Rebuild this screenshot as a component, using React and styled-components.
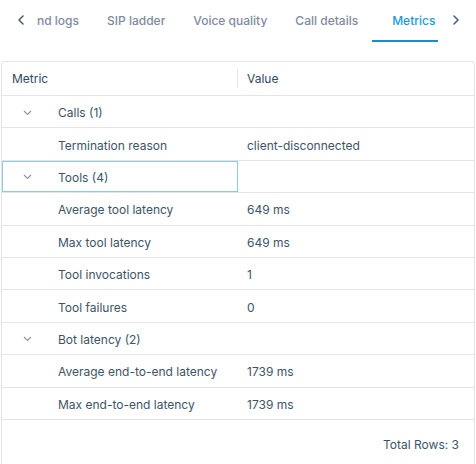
import React from "react";
import styled, { createGlobalStyle } from "styled-components";

const Global = createGlobalStyle`
  html, body { margin: 0; padding: 0; background: #fff; overflow: hidden; }
  body { font-family: Inter, "Noto Sans", sans-serif; font-size: 12px; color: #3d5468; }
  * { box-sizing: border-box; }
`;

const Page = styled.div`
  width: 476px;
  height: 464px;
  display: flex;
  flex-direction: column;
  padding: 0 1px;
`;

const TabBar = styled.div`
  display: flex;
  align-items: stretch;
  height: 42px;
  margin: 0 -1px;
`;

const Arrow = styled.button`
  width: ${(p) => p.$w}px;
  flex: none;
  border: 0;
  background: none;
  padding: 0 0 2px 0;
  display: flex;
  align-items: center;
  justify-content: ${(p) => (p.$side === "left" ? "flex-start" : "flex-end")};
  padding-left: ${(p) => (p.$side === "left" ? 17 : 0)}px;
  padding-right: ${(p) => (p.$side === "right" ? 16 : 0)}px;
  color: #4b6074;
  cursor: pointer;
`;

const TabList = styled.div`
  flex: 1;
  display: flex;
  overflow: hidden;
`;

const Tab = styled.div`
  position: relative;
  flex: none;
  display: flex;
  align-items: center;
  padding: 0 ${(p) => p.$pr}px 2px ${(p) => p.$pl}px;
  font-weight: 500;
  font-size: 12px;
  color: ${(p) => (p.$active ? "#1b9ad6" : "#7e8aa0")};
  white-space: nowrap;
  &::after {
    content: "";
    display: ${(p) => (p.$active ? "block" : "none")};
    position: absolute;
    left: 0;
    width: 66px;
    bottom: 0;
    height: 2px;
    background: #1190d0;
  }
`;

const Card = styled.div`
  margin-top: 19px;
  border: 1px solid #e2e4e6;
  border-bottom: 0;
  border-radius: 4px 4px 0 0;
  flex: 1;
  display: flex;
  flex-direction: column;
`;

const Row = styled.div`
  display: grid;
  grid-template-columns: 236px 1fr;
  height: ${(p) => (p.$header ? 34 : 32.4)}px;
  border-bottom: 1px solid #e2e4e6;
`;

const Cell = styled.div`
  position: relative;
  display: flex;
  align-items: center;
  padding-left: ${(p) => p.$pl ?? 10}px;
  padding-top: ${(p) => (p.$header ? 0 : 2)}px;
  color: ${(p) => (p.$header ? "#2f4a62" : "#3d5468")};
  white-space: nowrap;
  box-shadow: ${(p) => (p.$focus ? "inset 0 0 0 1px #8ccbea" : "none")};
  &::after {
    content: "";
    display: ${(p) => (p.$divider ? "block" : "none")};
    position: absolute;
    right: 0;
    top: 7px;
    bottom: 7px;
    width: 1px;
    background: #e2e4e6;
  }
`;

const ValueCell = styled(Cell)`
  padding-left: 9px;
`;

const Toggle = styled.span`
  width: 30px;
  margin-right: 16px;
  display: flex;
  justify-content: center;
  align-items: center;
`;

const Footer = styled.div`
  flex: 1;
  display: flex;
  justify-content: flex-end;
  padding: 17px 15px 0 0;
  color: #3d5468;
`;

const Chevron = ({ dir }) => (
  <svg width="8" height="12" viewBox="0 0 8 12">
    <path
      d={dir === "left" ? "M6 2 L2 6 L6 10" : "M2 2 L6 6 L2 10"}
      fill="none"
      stroke="#4b6074"
      strokeWidth="1.6"
      strokeLinecap="round"
      strokeLinejoin="round"
    />
  </svg>
);

const Caret = () => (
  <svg width="9" height="6" viewBox="0 0 9 6">
    <path d="M1 1 L4.5 4.5 L8 1" fill="none" stroke="#8a96a3" strokeWidth="1.1" />
  </svg>
);

const tabs = [
  { label: "nd logs", pl: 0, pr: 14 },
  { label: "SIP ladder", pl: 14, pr: 14 },
  { label: "Voice quality", pl: 14, pr: 14 },
  { label: "Call details", pl: 14, pr: 14 },
  { label: "Metrics", pl: 20, pr: 4, active: true },
];

const rows = [
  { group: true, label: "Calls (1)" },
  { label: "Termination reason", value: "client-disconnected" },
  { group: true, label: "Tools (4)", focus: true },
  { label: "Average tool latency", value: "649 ms" },
  { label: "Max tool latency", value: "649 ms" },
  { label: "Tool invocations", value: "1" },
  { label: "Tool failures", value: "0" },
  { group: true, label: "Bot latency (2)" },
  { label: "Average end-to-end latency", value: "1739 ms" },
  { label: "Max end-to-end latency", value: "1739 ms" },
];

export default function App() {
  return (
    <>
      <Global />
      <Page>
        <TabBar>
          <Arrow $side="left" $w={37}>
            <Chevron dir="left" />
          </Arrow>
          <TabList>
            {tabs.map((t) => (
              <Tab key={t.label} $pl={t.pl} $pr={t.pr} $active={t.active}>
                {t.label}
              </Tab>
            ))}
          </TabList>
          <Arrow $side="right" $w={34}>
            <Chevron dir="right" />
          </Arrow>
        </TabBar>
        <Card>
          <Row $header>
            <Cell $header $divider>Metric</Cell>
            <ValueCell $header>Value</ValueCell>
          </Row>
          {rows.map((r) =>
            r.group ? (
              <Row key={r.label}>
                <Cell $focus={r.focus}>
                  <Toggle>
                    <Caret />
                  </Toggle>
                  {r.label}
                </Cell>
                <ValueCell />
              </Row>
            ) : (
              <Row key={r.label}>
                <Cell $pl={56}>{r.label}</Cell>
                <ValueCell>{r.value}</ValueCell>
              </Row>
            )
          )}
          <Footer>Total Rows: 3</Footer>
        </Card>
      </Page>
    </>
  );
}
